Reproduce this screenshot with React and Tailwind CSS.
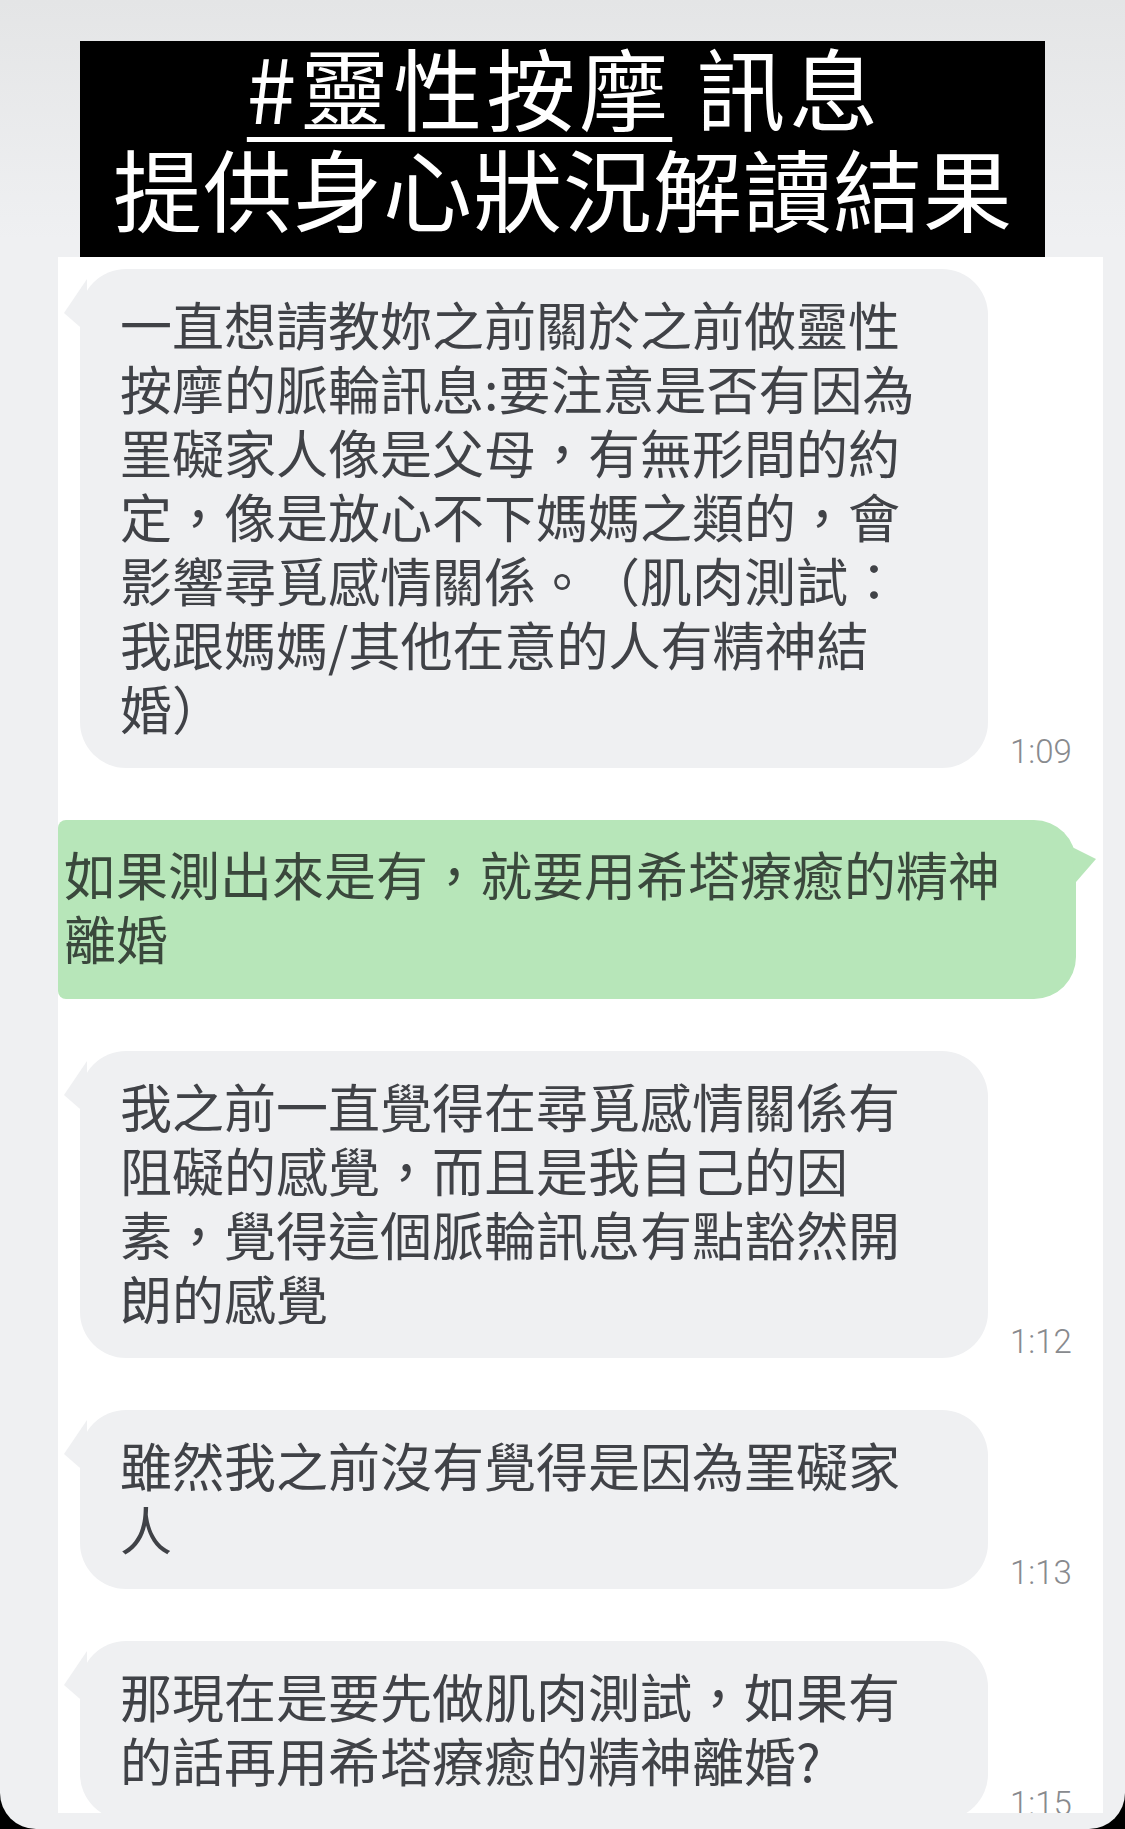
import React from 'react';

const CJK = "font-['Noto_Sans_CJK_TC','Noto_Sans_CJK_JP',sans-serif]";

const messages = [
  {
    id: 1,
    from: 'them',
    time: '1:09',
    lines: [
      '一直想請教妳之前關於之前做靈性',
      '按摩的脈輪訊息:要注意是否有因為',
      '罣礙家人像是父母，有無形間的約',
      '定，像是放心不下媽媽之類的，會',
      '影響尋覓感情關係。（肌肉測試：',
      '我跟媽媽/其他在意的人有精神結',
      '婚）',
    ],
  },
  {
    id: 2,
    from: 'me',
    lines: ['如果測出來是有，就要用希塔療癒的精神', '離婚'],
  },
  {
    id: 3,
    from: 'them',
    time: '1:12',
    lines: [
      '我之前一直覺得在尋覓感情關係有',
      '阻礙的感覺，而且是我自己的因',
      '素，覺得這個脈輪訊息有點豁然開',
      '朗的感覺',
    ],
  },
  {
    id: 4,
    from: 'them',
    time: '1:13',
    lines: ['雖然我之前沒有覺得是因為罣礙家', '人'],
  },
  {
    id: 5,
    from: 'them',
    time: '1:15',
    lines: ['那現在是要先做肌肉測試，如果有', '的話再用希塔療癒的精神離婚?'],
  },
];

const Incoming = ({ lines, time }) => (
  <div className="flex shrink-0 items-end pl-[22px]">
    <div className="relative w-[908px] rounded-[46px] bg-[#eff0f2] pl-[40px] pr-[30px] pt-[23px] pb-[28px] text-[52px] leading-[64px] text-[#404247] [text-spacing-trim:space-all]">
      {/* little tail on the top left */}
      <svg className="absolute left-[-17px] top-[10px]" width="24" height="54" viewBox="0 0 24 54">
        <path d="M24 0 L1 34 L24 54 Z" fill="#eff0f2" />
      </svg>
      {lines.map((line, i) => (
        <div key={i} className="relative whitespace-nowrap">
          {line}
        </div>
      ))}
    </div>
    <span className="ml-[22px] font-['Roboto',sans-serif] text-[33px] font-light leading-none text-[#888a8e]">
      {time}
    </span>
  </div>
);

const Outgoing = ({ lines }) => (
  <div className="flex shrink-0">
    <div className="relative w-[1018px] rounded-l-[8px] rounded-r-[42px] bg-[#b7e6b9] pl-[6px] pt-[22px] pb-[29px] text-[52px] leading-[64px] text-[#3a483c] [text-spacing-trim:space-all]">
      <svg className="absolute right-[-20px] top-[24px]" width="26" height="38" viewBox="0 0 26 38">
        <path d="M0 2 L26 15 L6 38 Z" fill="#b7e6b9" />
      </svg>
      {lines.map((line, i) => (
        <div key={i} className="relative whitespace-nowrap">
          {line}
        </div>
      ))}
    </div>
  </div>
);

export default function App() {
  return (
    <div className={`h-[1829px] w-[1125px] overflow-hidden bg-black ${CJK}`}>
      <div className="flex h-full flex-col rounded-b-[36px] bg-[linear-gradient(to_bottom,#e4e5e6,#eff0f2_240px)]">
        {/* title card */}
        <div className="relative z-10 mx-[80px] mt-[41px] h-[216px] shrink-0 bg-black text-center text-[89px] leading-[88px] text-white">
          <div className="pt-[1px] pl-[4px] tracking-[4px]">
            <span className="underline decoration-[5px] underline-offset-[13px]">#靈性按摩</span> 訊息
          </div>
          <div className="mt-[13px] pl-[1px] tracking-[1px]">提供身心狀況解讀結果</div>
        </div>

        {/* chat panel */}
        <div className="ml-[58px] flex h-[1556px] w-[1045px] shrink-0 flex-col gap-[52px] overflow-hidden bg-white pt-[12px]">
          {messages.map((m) =>
            m.from === 'me' ? (
              <Outgoing key={m.id} lines={m.lines} />
            ) : (
              <Incoming key={m.id} lines={m.lines} time={m.time} />
            )
          )}
        </div>
      </div>
    </div>
  );
}
